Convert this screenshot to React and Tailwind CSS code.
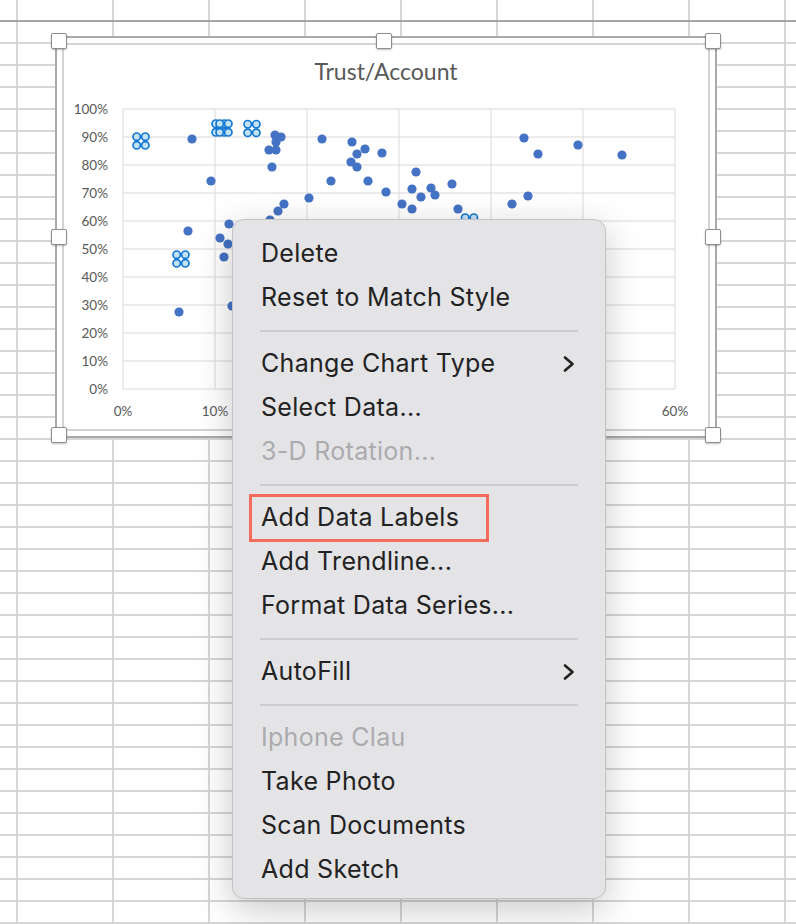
import React from "react";

const COLS = [0, 1, 2, 3, 4, 5, 6, 7];
const ROWS = Array.from({ length: 42 }, (_, i) => i);

function SheetRow({ header }) {
  return (
    <div
      className={
        header
          ? "flex h-[22px] border-b-2 border-[#a6a6a6]"
          : "flex h-[22px] border-b-2 border-[#d6d6d6]"
      }
    >
      <div className="w-[18px] shrink-0 border-r-2 border-[#d6d6d6]" />
      {COLS.map((c) => (
        <div key={c} className="w-[96px] shrink-0 border-r-2 border-[#d6d6d6]" />
      ))}
      <div className="flex-1" />
    </div>
  );
}

const DOTS = [
  [192, 139], [211, 181], [188, 231], [220, 238], [228, 244], [224, 257], [229, 224],
  [179, 312], [275, 135], [281, 137], [276, 142], [269, 150], [276, 150], [272, 167],
  [278, 211], [284, 204], [270, 220], [232, 306],
  [322, 139], [352, 142], [365, 149], [357, 154], [382, 153], [351, 162], [357, 167],
  [331, 181], [368, 181], [416, 172], [386, 192], [412, 189], [431, 188], [435, 195],
  [421, 197], [309, 198], [402, 204], [412, 209], [452, 184], [524, 138], [538, 154],
  [578, 145], [622, 155], [528, 196], [512, 204], [458, 209],
];

const CLUSTERS = [
  [141, 141], [220, 128], [224, 128], [252, 128.5], [181, 259], [469.5, 222],
];

const Y_LABELS = ["100%", "90%", "80%", "70%", "60%", "50%", "40%", "30%", "20%", "10%", "0%"];
const X_GRID = [0, 1, 2, 3, 4, 5, 6];
const X_LABELS = [
  [0, "0%"],
  [1, "10%"],
  [6, "60%"],
];

function Plot() {
  return (
    <svg width="644" height="332" viewBox="64 97 644 332" className="block">
      {Y_LABELS.map((_, k) => (
        <line key={"h" + k} x1="123" x2="675" y1={109 + 28 * k} y2={109 + 28 * k} stroke="#d9d9d9" strokeWidth="1" />
      ))}
      {X_GRID.map((k) => (
        <line key={"v" + k} x1={123 + 92 * k} x2={123 + 92 * k} y1="109" y2="389" stroke="#d9d9d9" strokeWidth="1" />
      ))}
      {Y_LABELS.map((t, k) => (
        <text key={"yl" + k} x="108" y={109 + 28 * k + 4.8} textAnchor="end" fontSize="13.5" fill="#595959" fontFamily="Lato, 'Open Sans', sans-serif">
          {t}
        </text>
      ))}
      {X_LABELS.map(([k, t]) => (
        <text key={"xl" + k} x={123 + 92 * k} y="416" textAnchor="middle" fontSize="13.5" fill="#595959" fontFamily="Lato, 'Open Sans', sans-serif">
          {t}
        </text>
      ))}
      {DOTS.map(([x, y], i) => (
        <circle key={"d" + i} cx={x} cy={y} r="4.6" fill="#4472c4" />
      ))}
      {CLUSTERS.map(([x, y], i) => (
        <g key={"c" + i} fill="#c3e1f7" stroke="#1479d0" strokeWidth="1.7">
          <circle cx={x - 4.3} cy={y - 4.3} r="3.7" />
          <circle cx={x + 4.3} cy={y - 4.3} r="3.7" />
          <circle cx={x - 4.3} cy={y + 4.3} r="3.7" />
          <circle cx={x + 4.3} cy={y + 4.3} r="3.7" />
        </g>
      ))}
    </svg>
  );
}

function Handle({ className }) {
  return (
    <div
      className={
        "absolute h-[16px] w-[16px] rounded-[2px] border border-[#8e8e8e] bg-white shadow-[0_1px_2px_rgba(0,0,0,0.25)] " +
        className
      }
    />
  );
}

function Chevron() {
  return (
    <svg width="12" height="16" viewBox="0 0 12 16" className="block">
      <polyline points="2,1.5 9.5,8 2,14.5" fill="none" stroke="#222222" strokeWidth="2.6" strokeLinecap="round" strokeLinejoin="round" />
    </svg>
  );
}

function Item({ label, disabled, sub, highlight }) {
  return (
    <div className="relative flex h-[44px] items-center justify-between pl-[28px] pr-[30px]">
      <span className={disabled ? "text-[#ababae]" : "text-[#222222]"}>{label}</span>
      {sub ? <Chevron /> : null}
      {highlight ? (
        <div className="absolute left-[16px] top-[-2px] h-[48px] w-[240px] border-[3px] border-[#f26b5b]" />
      ) : null}
    </div>
  );
}

function Sep() {
  return (
    <div className="flex h-[22px] items-center px-[27px]">
      <div className="h-[2px] w-full bg-[#cdcdd0]" />
    </div>
  );
}

export default function App() {
  return (
    <div className="relative h-[924px] w-[796px] overflow-hidden bg-white">
      <div className="flex flex-col">
        {ROWS.map((r) => (
          <SheetRow key={r} header={r === 0} />
        ))}
      </div>

      <div className="absolute left-[55px] top-[36px] h-[402px] w-[662px] border-2 border-[#a9a9a9] bg-white p-[5px]">
        <div className="flex h-full w-full flex-col border-2 border-[#d3d3d3]">
          <div
            className="h-[52px] shrink-0 pt-[12px] text-center text-[23px] leading-[29px] text-[#595959]"
            style={{ fontFamily: "Lato, 'Open Sans', sans-serif" }}
          >
            Trust/Account
          </div>
          <Plot />
        </div>
      </div>

      <Handle className="left-[51px] top-[33px]" />
      <Handle className="left-[376px] top-[33px]" />
      <Handle className="left-[705px] top-[33px]" />
      <Handle className="left-[51px] top-[229px]" />
      <Handle className="left-[705px] top-[229px]" />
      <Handle className="left-[51px] top-[427px]" />
      <Handle className="left-[376px] top-[427px]" />
      <Handle className="left-[705px] top-[427px]" />

      <div
        className="absolute left-[232px] top-[219px] w-[374px] rounded-[12px] border border-[#c3c3c5] bg-[#e4e4e7] pb-[6px] pt-[12px] text-[25px] tracking-[0.3px] shadow-[0_10px_36px_rgba(0,0,0,0.22)]"
        style={{ fontFamily: "Inter, 'Noto Sans', sans-serif" }}
      >
        <Item label="Delete" />
        <Item label="Reset to Match Style" />
        <Sep />
        <Item label="Change Chart Type" sub />
        <Item label="Select Data..." />
        <Item label="3-D Rotation..." disabled />
        <Sep />
        <Item label="Add Data Labels" highlight />
        <Item label="Add Trendline..." />
        <Item label="Format Data Series..." />
        <Sep />
        <Item label="AutoFill" sub />
        <Sep />
        <Item label="Iphone Clau" disabled />
        <Item label="Take Photo" />
        <Item label="Scan Documents" />
        <Item label="Add Sketch" />
      </div>
    </div>
  );
}
